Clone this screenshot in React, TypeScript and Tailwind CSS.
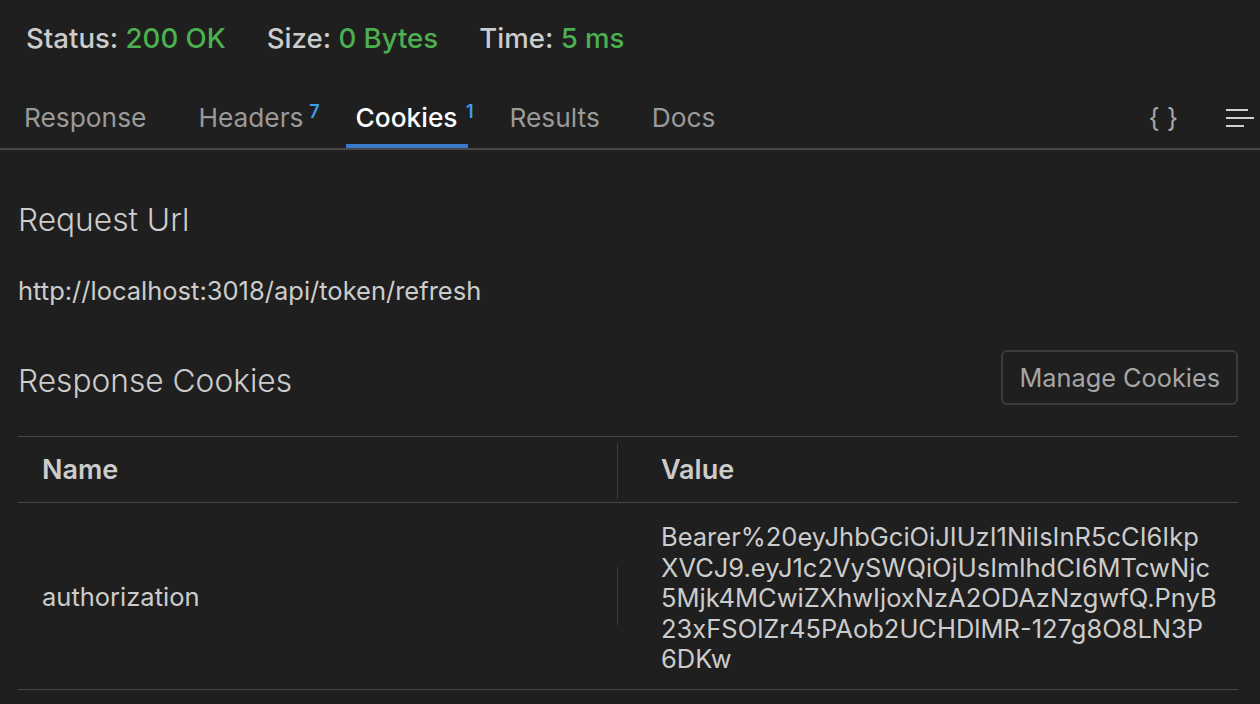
import React from "react";

const font = { fontFamily: "Inter, 'Noto Sans', sans-serif" };

function Tab({ label, count, active }: { label: string; count?: number; active?: boolean }) {
  return (
    <div className="relative flex h-full flex-col justify-end">
      <div className={`px-[10px] pb-[10px] text-[26.3px] leading-[32px] ${active ? "text-white font-medium" : "text-[#9a9a9a]"}`}>
        {label}
      </div>
      {count !== undefined && (
        <span className="absolute right-[-6px] top-[25px] text-[18px] font-semibold leading-none text-[#3d9cf0]">{count}</span>
      )}
      <div className={`h-[4px] ${active ? "bg-[#3a78c9]" : "bg-transparent"}`} />
    </div>
  );
}

export default function App() {
  const valueLines = [
    "Bearer%20eyJhbGciOiJIUzI1NiIsInR5cCI6Ikp",
    "XVCJ9.eyJ1c2VySWQiOjUsImlhdCI6MTcwNjc",
    "5Mjk4MCwiZXhwIjoxNzA2ODAzNzgwfQ.PnyB",
    "23xFSOlZr45PAob2UCHDlMR-127g8O8LN3P",
    "6DKw",
  ];
  return (
    <div className="h-[704px] w-[1260px] overflow-hidden bg-[#1f1f1f] text-[#cccccc]" style={font}>
      {/* status */}
      <div className="flex h-[78px] items-center gap-[41px] px-[26px] text-[27.6px] font-medium">
        <div>
          <span className="text-[#cccccc]">Status: </span>
          <span className="text-[#4caf50]">200 OK</span>
        </div>
        <div>
          <span className="text-[#cccccc]">Size: </span>
          <span className="text-[#4caf50]">0 Bytes</span>
        </div>
        <div>
          <span className="text-[#cccccc]">Time: </span>
          <span className="text-[#4caf50]">5 ms</span>
        </div>
      </div>
      {/* tabs */}
      <div className="flex h-[72px] items-stretch border-b-2 border-[#484848] pl-[14px] pr-[4px]">
        <div className="flex items-stretch gap-[32px]">
          <Tab label="Response" />
          <Tab label="Headers" count={7} />
          <Tab label="Cookies" count={1} active />
          <Tab label="Results" />
          <Tab label="Docs" />
        </div>
        <div className="ml-auto flex items-center gap-[48px] pt-[10px]">
          <span className="text-[26px] leading-none text-[#a8a8a8]">{"{ }"}</span>
          <svg width="30" height="22" viewBox="0 0 30 22">
            <line x1="0" y1="3" x2="22" y2="3" stroke="#cfcfcf" strokeWidth="2" />
            <line x1="0" y1="11" x2="28" y2="11" stroke="#cfcfcf" strokeWidth="2" />
            <line x1="0" y1="19" x2="18" y2="19" stroke="#cfcfcf" strokeWidth="2" />
          </svg>
        </div>
      </div>
      {/* content */}
      <div className="pl-[18px] pr-[22px]">
        <div className="mt-[50px] text-[31.7px] font-light leading-[40px] text-[#cccccc]">Request Url</div>
        <div className="mt-[35px] text-[25.5px] leading-[32px] text-[#cccccc]">http://localhost:3018/api/token/refresh</div>
        <div className="mt-[43px] flex items-center justify-between">
          <div className="mt-[6px] text-[31.7px] font-light leading-[40px] text-[#cccccc]">Response Cookies</div>
          <button className="h-[55px] rounded-[6px] border-2 border-[#3c3c3c] px-[16px] text-[25.3px] text-[#a6a6a6]">
            Manage Cookies
          </button>
        </div>
        <div className="mt-[31px] border-t border-[#454545]">
          <div className="flex h-[66px] items-center border-b border-[#454545] pt-[2px] text-[27px] font-semibold text-[#cccccc]">
            <div className="w-[599px] pl-[24px]">Name</div>
            <div className="h-[56px] w-px bg-[#3e3e3e]" />
            <div className="pl-[43px]">Value</div>
          </div>
          <div className="flex items-center border-b border-[#454545] text-[25.5px] text-[#cccccc]">
            <div className="w-[599px] pl-[24px] pt-[2px]">authorization</div>
            <div className="h-[58px] w-px bg-[#3e3e3e]" />
            <div className="pl-[43px] pt-[19px] pb-[14px] leading-[30.5px]">
              {valueLines.map((l, i) => (
                <div key={i}>{l}</div>
              ))}
            </div>
          </div>
        </div>
      </div>
    </div>
  );
}
